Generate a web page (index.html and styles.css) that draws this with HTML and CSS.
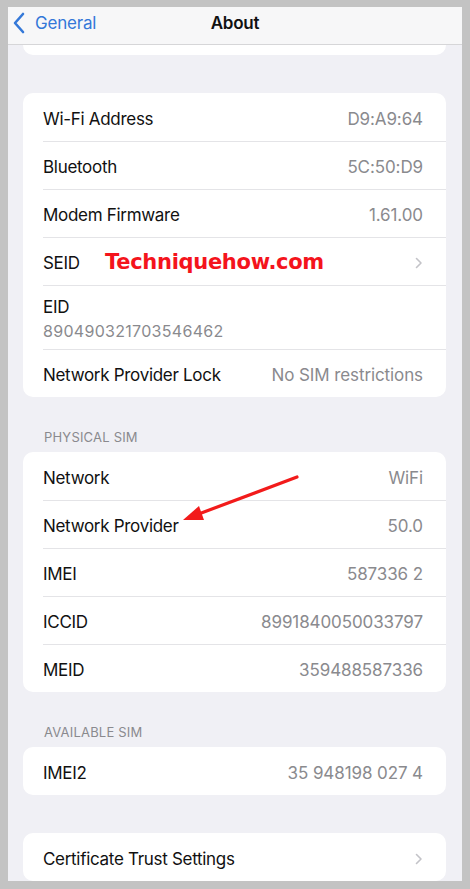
FILE: index.html
```html
<!DOCTYPE html>
<html lang="en">
<head>
  <meta charset="UTF-8">
  <title>About</title>
  <link rel="stylesheet" href="styles.css">
</head>
<body>
  <div class="screen">
    <div class="navbar">
      <a class="back" href="#">
        <svg class="back-icon" width="14" height="22" viewBox="0 0 14 22">
          <polyline points="11,2 3,11 11,20" fill="none" stroke="#3478d8" stroke-width="2.6" stroke-linecap="round" stroke-linejoin="round"/>
        </svg>
        General
      </a>
      <div class="title">About</div>
    </div>

    <div class="content">
      <div class="card peek"></div>

      <div class="card">
        <div class="row"><span class="label">Wi-Fi Address</span><span class="value">D9:A9:64</span></div>
        <div class="row"><span class="label">Bluetooth</span><span class="value">5C:50:D9</span></div>
        <div class="row"><span class="label">Modem Firmware</span><span class="value">1.61.00</span></div>
        <div class="row">
          <span class="label">SEID</span>
          <span class="watermark">Techniquehow.com</span>
          <svg class="chevron" width="8" height="12" viewBox="0 0 8 12"><polyline points="1.5,1.5 6,6 1.5,10.5" fill="none" stroke="#c3c3c8" stroke-width="1.6" stroke-linecap="round" stroke-linejoin="round"/></svg>
        </div>
        <div class="row tall">
          <span class="label">EID</span>
          <span class="sub">890490321703546462</span>
        </div>
        <div class="row"><span class="label">Network Provider Lock</span><span class="value">No SIM restrictions</span></div>
      </div>

      <div class="section-title">PHYSICAL SIM</div>
      <div class="card">
        <div class="row"><span class="label">Network</span><span class="value">WiFi</span></div>
        <div class="row"><span class="label">Network Provider</span><span class="value">50.0</span></div>
        <div class="row"><span class="label">IMEI</span><span class="value">587336 2</span></div>
        <div class="row"><span class="label">ICCID</span><span class="value">8991840050033797</span></div>
        <div class="row"><span class="label">MEID</span><span class="value">359488587336</span></div>
      </div>

      <div class="section-title">AVAILABLE SIM</div>
      <div class="card">
        <div class="row"><span class="label">IMEI2</span><span class="value">35 948198 027 4</span></div>
      </div>

      <div class="card last">
        <div class="row">
          <span class="label">Certificate Trust Settings</span>
          <svg class="chevron" width="8" height="12" viewBox="0 0 8 12"><polyline points="1.5,1.5 6,6 1.5,10.5" fill="none" stroke="#c3c3c8" stroke-width="1.6" stroke-linecap="round" stroke-linejoin="round"/></svg>
        </div>
      </div>
    </div>

    <svg class="arrow" width="470" height="889" viewBox="0 0 470 889">
      <line x1="297" y1="477" x2="196" y2="515" stroke="#f21b1b" stroke-width="3.2" stroke-linecap="round"/>
      <polygon points="183,520 199,506 204,520" fill="#f21b1b"/>
    </svg>
  </div>
</body>
</html>
```

FILE: styles.css
```css
body {
  margin: 0;
  font-family: Inter, "Noto Sans", sans-serif;
  color: #111;
}

.screen {
  position: relative;
  width: 470px;
  height: 889px;
  box-sizing: border-box;
  border-style: solid;
  border-color: #c3c3c3;
  border-width: 7px 8px 8px 8px;
  background: #f0f0f5;
  overflow: hidden;
}

.navbar {
  position: relative;
  height: 37px;
  background: #f7f7f8;
  border-bottom: 1px solid #d6d6d8;
  display: flex;
  align-items: center;
  justify-content: center;
}

.back {
  position: absolute;
  left: 4px;
  top: 5px;
  display: flex;
  align-items: center;
  gap: 9px;
  color: #3478d8;
  text-decoration: none;
  font-size: 17px;
  letter-spacing: -0.2px;
}

.title {
  font-size: 17px;
  font-weight: 600;
  letter-spacing: -0.2px;
  margin-top: -6px;
}

.content {
  padding: 0 16px 0 15px;
}

.card {
  background: #fff;
  border-radius: 10px;
  margin-top: 38px;
}

.card.peek {
  margin-top: 0;
  height: 10px;
  border-radius: 0 0 10px 10px;
}

.row {
  position: relative;
  height: 48px;
  margin-left: 20px;
  padding: 3px 23px 0 0;
  display: flex;
  align-items: center;
  justify-content: space-between;
  border-top: 1px solid #e4e4e7;
  box-sizing: border-box;
}

.row:first-child {
  border-top: none;
}

.row.tall {
  height: 64px;
  flex-direction: column;
  align-items: flex-start;
  justify-content: center;
  gap: 4px;
}

.label {
  font-size: 17px;
  letter-spacing: -0.3px;
  color: #111;
}

.value {
  font-size: 17px;
  letter-spacing: -0.1px;
  color: #8a8a8e;
}

.sub {
  font-size: 16px;
  color: #8a8a8e;
  letter-spacing: 0.3px;
}

.chevron {
  margin-right: 0;
}

.watermark {
  position: absolute;
  left: 62px;
  top: 12px;
  font-family: "DejaVu Sans", sans-serif;
  font-weight: bold;
  font-size: 21px;
  color: #f4141c;
  letter-spacing: -0.3px;
}

.section-title {
  margin: 32px 0 7px 21px;
  font-size: 13px;
  line-height: 16px;
  color: #8a8a8e;
  letter-spacing: 0.2px;
}

.section-title + .card {
  margin-top: 0;
}

.arrow {
  position: absolute;
  left: -8px;
  top: -7px;
  pointer-events: none;
}
```
